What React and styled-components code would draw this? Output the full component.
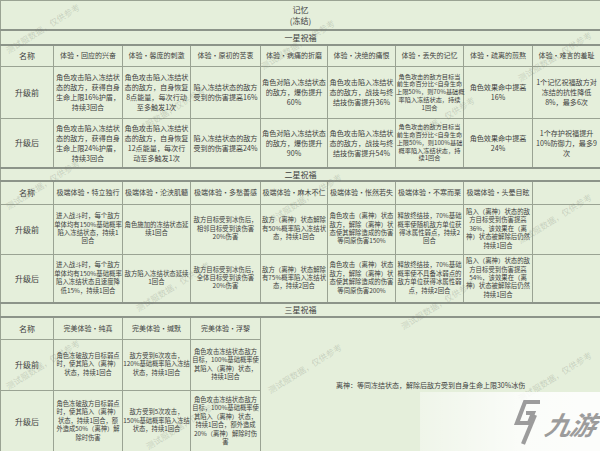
import React from 'react';
import styled, { createGlobalStyle } from 'styled-components';

const Global = createGlobalStyle`
  html, body { margin: 0; padding: 0; background: #e5efdb; }
  body {
    width: 600px; height: 451px; overflow: hidden;
    font-family: "Noto Sans CJK SC", "Noto Sans", sans-serif;
  }
`;

const Page = styled.div`
  position: relative;
  width: 600px;
  height: 451px;
  overflow: hidden;
  background: #e5efdb;
`;

const Table = styled.table`
  width: 600px;
  table-layout: fixed;
  border-collapse: collapse;
  color: #3e3e3e;
`;

const BORDER = '#9aa393';

const TitleCell = styled.td`
  height: 28px;
  padding: 0;
  text-align: center;
  font-size: 8px;
  line-height: 11px;
  border: 1px solid ${BORDER};
  border-bottom: 2px solid #8c9489;
  white-space: pre;
`;

const SectionCell = styled.td`
  height: ${(p) => p.$h}px;
  padding: 0;
  text-align: center;
  font-size: 8px;
  line-height: 10px;
  border: 1px solid ${BORDER};
  border-top: 2px solid #8c9489;
  border-bottom: 2px solid #8c9489;
`;

const HeadCell = styled.td`
  padding: 0;
  text-align: center;
  vertical-align: middle;
  font-size: 7px;
  line-height: 9px;
  border: 1px solid ${BORDER};
  white-space: pre;
  overflow: visible;
`;

const NameCell = styled.td`
  padding: 0;
  text-align: center;
  vertical-align: middle;
  font-size: 8px;
  border: 1px solid ${BORDER};
`;

const sizes = {
  a: { fs: 7.1, lh: 10 },
  s: { fs: 6.2, lh: 7.8 },
  b: { fs: 6.4, lh: 8.4 },
  c: { fs: 6.3, lh: 8.5 },
};

const Cell = styled.td`
  padding: 0;
  text-align: center;
  vertical-align: middle;
  font-size: ${(p) => sizes[p.$sz].fs}px;
  line-height: ${(p) => sizes[p.$sz].lh}px;
  border: 1px solid ${BORDER};
  white-space: pre;
  overflow: visible;
`;

const MergedCell = styled.td`
  padding: 0;
  text-align: center;
  vertical-align: middle;
  font-size: 7px;
  border: 1px solid ${BORDER};
`;

const Row = styled.tr`
  height: ${(p) => p.$h}px;
`;

const Watermark = styled.span`
  position: absolute;
  left: ${(p) => p.$x}px;
  top: ${(p) => p.$y}px;
  font-size: 8.5px;
  color: rgba(110, 115, 105, 0.25);
  white-space: nowrap;
  transform: rotate(-32deg);
  transform-origin: center;
  pointer-events: none;
`;

const LogoShade = styled.div`
  position: absolute;
  left: 420px;
  top: 392px;
  width: 180px;
  height: 59px;
  background: linear-gradient(90deg, rgba(255,255,255,0.4), rgba(255,255,255,0.85) 60%, rgba(255,255,255,0.9));
  display: flex;
  align-items: center;
  justify-content: flex-end;
  gap: 4px;
  padding-right: 4px;
  box-sizing: border-box;
`;

const LogoText = styled.span`
  font-family: "Noto Sans CJK SC", sans-serif;
  font-size: 26px;
  font-weight: 700;
  font-style: italic;
  color: #9c9c9c;
  letter-spacing: -1px;
  transform: skewX(-12deg);
  margin-top: 4px;
`;

const widths = [53, 69, 68, 70, 67, 68, 68, 69, 68];

const one = {
  heads: ['体验·回应的兴奋', '体验·馨庞的刺激', '体验·原初的苦衷', '体验·病痛的折磨', '体验·决绝的痛恨', '体验·丢失的记忆', '体验·疏离的煎熬', '体验·难言的羞耻'],
  before: [
    ['角色攻击陷入冻结状\n态的敌方，获得自身\n生命上限16%护盾，\n持续3回合', 'a'],
    ['角色攻击陷入冻结状\n态的敌方，自身恢复\n8点能量，每次行动\n至多触发1次', 'a'],
    ['陷入冻结状态的敌方\n受到的伤害提高16%', 'a'],
    ['角色对陷入冻结状态\n的敌方，爆伤提升\n60%', 'a'],
    ['角色攻击陷入冻结状\n态的敌方，战技与终\n结技伤害提升36%', 'a'],
    ['角色攻击的敌方目标当\n前生命百分比<自身生命\n上限50%，则70%基础概\n率陷入冻结状态，持续\n1回合', 's'],
    ['角色效果命中提高\n16%', 'a'],
    ['1个记忆祝福敌方对\n冻结的抗性降低\n8%，最多6次', 'a'],
  ],
  after: [
    ['角色攻击陷入冻结状\n态的敌方，获得自身\n生命上限24%护盾，\n持续3回合', 'a'],
    ['角色攻击陷入冻结状\n态的敌方，自身恢复\n12点能量，每次行\n动至多触发1次', 'a'],
    ['陷入冻结状态的敌方\n受到的伤害提高24%', 'a'],
    ['角色对陷入冻结状态\n的敌方，爆伤提升\n90%', 'a'],
    ['角色攻击陷入冻结状\n态的敌方，战技与终\n结技伤害提升54%', 'a'],
    ['角色攻击的敌方目标当\n前生命百分比<自身生命\n上限50%，则100%基础\n概率陷入冻结状态，持\n续1回合', 's'],
    ['角色效果命中提高\n24%', 'a'],
    ['1个存护祝福提升\n10%防御力，最多9\n次', 'a'],
  ],
};

const two = {
  heads: ['极端体验·特立独行', '极端体验·沦浃肌髓', '极端体验·多愁善感', '极端体验·麻木不仁', '极端体验·怅然若失', '极端体验·不寒而栗', '极端体验·头晕目眩', ''],
  before: [
    '进入战斗时，每个敌方\n单体均有150%基础概率\n陷入冻结状态，持续1\n回合',
    '角色施加的冻结状态延\n续1回合',
    '敌方目标受到冰伤后，\n相邻目标受到该伤害\n20%伤害',
    '敌方（离神）状态解除\n有50%概率陷入冻结状\n态，持续1回合',
    '角色攻击（离神）状态\n敌方，解除（离神）状\n态使其解除造成的伤害\n等同原伤害150%',
    '释放终结技，70%基础\n概率使随机敌方单位获\n得冰属性弱点，持续2\n回合',
    '陷入（离神）状态的敌\n方目标受到伤害提高\n36%，该效果在（离\n神）状态被解除后仍然\n持续1回合',
    '',
  ],
  after: [
    '进入战斗时，每个敌方\n单体均有150%基础概率\n陷入冻结状态且速度降\n低15%，持续1回合',
    '敌方陷入冻结状态延续\n1回合',
    '敌方目标受到冰伤后，\n全体目标受到该伤害\n20%伤害',
    '敌方（离神）状态解除\n有75%概率陷入冻结状\n态，持续2回合',
    '角色攻击（离神）状态\n敌方，解除（离神）状\n态使其解除造成的伤害\n等同原伤害200%',
    '释放终结技，70%基础\n概率使不具备冰弱点的\n敌方单位获得冰属性弱\n点，持续2回合',
    '陷入（离神）状态的敌\n方目标受到伤害提高\n54%，该效果在（离\n神）状态被解除后仍然\n持续1回合',
    '',
  ],
};

const three = {
  heads: ['完美体验·纯真', '完美体验·缄默', '完美体验·浮黎'],
  before: [
    '角色冻破敌方目标弱点\n时，使其陷入（离神）\n状态，持续1回合',
    '敌方受到6次攻击，\n120%基础概率陷入冻结\n状态，持续1回合',
    '角色攻击冻结状态敌方\n目标，100%基础概率使\n其陷入（离神）状态，\n持续1回合',
  ],
  after: [
    '角色冻破敌方目标弱点\n时，使其陷入（离神）\n状态，持续1回合，额\n外造成50%（离神）解\n除时伤害',
    '敌方受到5次攻击，\n150%基础概率陷入冻结\n状态，持续1回合',
    '角色攻击冻结状态敌方\n目标，100%基础概率使\n其陷入（离神）状态，\n持续1回合，额外造成\n20%（离神）解除时伤\n害',
  ],
};

const marks = [
  [0, 22], [255, 38], [512, 50],
  [125, 105], [395, 115],
  [0, 178], [262, 192], [512, 212],
  [130, 280], [395, 298],
  [0, 358], [262, 362], [512, 370],
  [140, 418],
];

function LogoMark() {
  return (
    <svg width="30" height="48" viewBox="0 0 30 48" fill="none">
      <path d="M28 4 L13 4 L5 25 L17 25 L21 15 L14 15" stroke="#9c9c9c" strokeWidth="4.2" strokeLinejoin="miter" />
      <path d="M23 17 L11 46" stroke="#9c9c9c" strokeWidth="4.2" />
    </svg>
  );
}

export default function App() {
  return (
    <Page>
      <Global />
      <Table>
        <colgroup>
          {widths.map((w, i) => (
            <col key={i} style={{ width: w }} />
          ))}
        </colgroup>
        <tbody>
          <tr>
            <TitleCell colSpan={9}>{'记忆\n(冻结)'}</TitleCell>
          </tr>
          <tr>
            <SectionCell colSpan={9} $h={13}>一星祝福</SectionCell>
          </tr>
          <Row $h={21}>
            <NameCell>名称</NameCell>
            {one.heads.map((h) => (
              <HeadCell key={h}>{h}</HeadCell>
            ))}
          </Row>
          <Row $h={52}>
            <NameCell>升级前</NameCell>
            {one.before.map(([t, s], i) => (
              <Cell key={i} $sz={s}>{t}</Cell>
            ))}
          </Row>
          <Row $h={50}>
            <NameCell>升级后</NameCell>
            {one.after.map(([t, s], i) => (
              <Cell key={i} $sz={s}>{t}</Cell>
            ))}
          </Row>
          <tr>
            <SectionCell colSpan={9} $h={11}>二星祝福</SectionCell>
          </tr>
          <Row $h={23}>
            <NameCell>名称</NameCell>
            {two.heads.map((h, i) => (
              <HeadCell key={i}>{h}</HeadCell>
            ))}
          </Row>
          <Row $h={50}>
            <NameCell>升级前</NameCell>
            {two.before.map((t, i) => (
              <Cell key={i} $sz="b">{t}</Cell>
            ))}
          </Row>
          <Row $h={49}>
            <NameCell>升级后</NameCell>
            {two.after.map((t, i) => (
              <Cell key={i} $sz="b">{t}</Cell>
            ))}
          </Row>
          <tr>
            <SectionCell colSpan={9} $h={12}>三星祝福</SectionCell>
          </tr>
          <Row $h={22}>
            <NameCell>名称</NameCell>
            {three.heads.map((h) => (
              <HeadCell key={h}>{h}</HeadCell>
            ))}
            <MergedCell colSpan={5} rowSpan={3}>
              离神：等同冻结状态，解除后敌方受到自身生命上限30%冰伤
            </MergedCell>
          </Row>
          <Row $h={51}>
            <NameCell>升级前</NameCell>
            {three.before.map((t, i) => (
              <Cell key={i} $sz="c">{t}</Cell>
            ))}
          </Row>
          <Row $h={62}>
            <NameCell>升级后</NameCell>
            {three.after.map((t, i) => (
              <Cell key={i} $sz="c">{t}</Cell>
            ))}
          </Row>
        </tbody>
      </Table>
      {marks.map(([x, y], i) => (
        <Watermark key={i} $x={x} $y={y}>测试服数据，仅供参考</Watermark>
      ))}
      <LogoShade>
        <LogoMark />
        <LogoText>九游</LogoText>
      </LogoShade>
    </Page>
  );
}
